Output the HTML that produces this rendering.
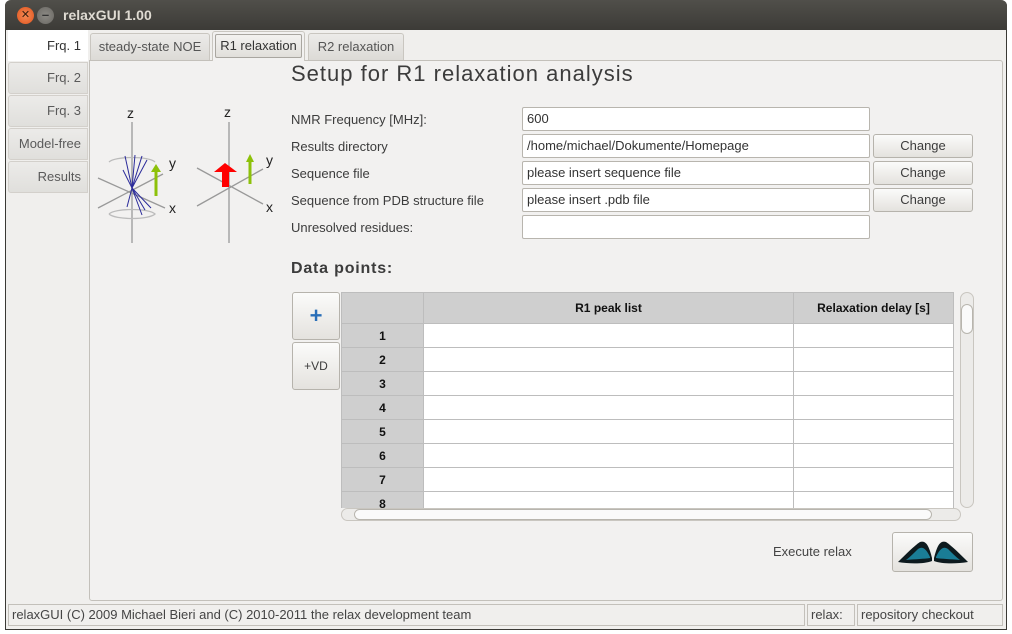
<!DOCTYPE html>
<html><head><meta charset="utf-8"><style>
*{box-sizing:border-box;margin:0;padding:0}
body{width:1012px;height:634px;background:#fff;font-family:"Liberation Sans","DejaVu Sans",sans-serif;font-size:13px;color:#3c3c3c;position:relative;overflow:hidden}
.abs{position:absolute}
#win{left:5px;top:0;width:1002px;height:630px;background:#f0efed;border:1px solid #3a3935;border-top:none;border-radius:6px 6px 0 0}
#title{left:5px;top:0;width:1002px;height:30px;background:linear-gradient(#504f4a,#3c3b37);border-radius:6px 6px 0 0;color:#dfdbd2;font-weight:bold;font-size:14px}
.ltab{left:8px;width:80px;height:32px;border:1px solid #d3d0cb;border-radius:3px 0 0 3px;background:linear-gradient(#ecebe9,#e0dfdc);text-align:right;padding-right:6px;line-height:30px;color:#5a5a5a}
.ttab{top:33px;height:27px;border:1px solid #c9c6c0;border-bottom:none;border-radius:3px 3px 0 0;background:linear-gradient(#ecebe9,#dcdad6);text-align:center;line-height:26px;color:#555}
#panel{left:89px;top:60px;width:914px;height:541px;border:1px solid #c3c0ba;border-radius:0 3px 3px 3px;background:#f2f1f0}
.lbl{left:291px;font-size:13px;color:#3c3c3c}
.inp{left:522px;width:348px;height:24px;background:#fff;border:1px solid #b8b5ae;border-radius:2px;padding-left:4px;line-height:22px;color:#333}
.btn{border:1px solid #b6b3ac;border-radius:3px;background:linear-gradient(#fbfbfa,#e4e2de);text-align:center;color:#3c3c3c}
.cbtn{left:873px;width:100px;height:24px;line-height:22px}
table{border-collapse:collapse;position:absolute;left:341px;top:292px;width:612px;table-layout:fixed}
td,th{border:1px solid #bdbdbd;height:24px;background:#fff}
th{background:#cfcfcf;height:31px;font-size:12px;color:#111}
td.rh{background:#cfcfcf;font-weight:bold;text-align:center;font-size:12px;color:#111}
.stat{top:604px;height:22px;border:1px solid #c3c0ba;line-height:20px;padding-left:3px;font-size:13px;color:#444}
</style></head><body>
<div id="win" class="abs"></div>
<div id="title" class="abs">
 <div class="abs" style="left:12px;top:7px;width:17px;height:17px;border-radius:50%;background:radial-gradient(#f58b55,#e0531d);color:#3a2010;font-size:11px;text-align:center;line-height:17px">✕</div>
 <div class="abs" style="left:32px;top:7px;width:17px;height:17px;border-radius:50%;background:radial-gradient(#8c8a85,#6a6863);color:#333;font-size:13px;text-align:center;line-height:15px">–</div>
 <div class="abs" style="left:58px;top:7px">relaxGUI 1.00</div>
</div>
<div class="abs ltab" style="top:30px;height:31px;background:#fff;border-color:#fff;color:#333;border-radius:0">Frq. 1</div>
<div class="abs ltab" style="top:62px">Frq. 2</div>
<div class="abs ltab" style="top:95px">Frq. 3</div>
<div class="abs ltab" style="top:128px">Model-free</div>
<div class="abs ltab" style="top:161px">Results</div>
<div id="panel" class="abs"></div>
<div class="abs ttab" style="left:90px;width:120px">steady-state NOE</div>
<div class="abs ttab" style="left:212px;top:31px;height:30px;width:93px;background:#f2f1f0;padding:2px"><div style="border:1px solid #a9a6a0;border-radius:2px;height:24px;line-height:22px;background:linear-gradient(#f3f2f0,#e1dfdb);color:#333">R1 relaxation</div></div>
<div class="abs ttab" style="left:308px;width:96px">R2 relaxation</div>

<svg class="abs" style="left:95px;top:100px" width="190" height="150">
 <g stroke="#999" stroke-width="1.3" fill="none">
  <line x1="37" y1="22" x2="37" y2="143"/><line x1="3" y1="108" x2="68" y2="74"/><line x1="3" y1="78" x2="70" y2="108"/>
  <line x1="134" y1="22" x2="134" y2="143"/><line x1="102" y1="106" x2="168" y2="69"/><line x1="102" y1="68" x2="168" y2="104"/>
  <path d="M14 62 C20 56 54 56 60 62" stroke="#bbb"/><path d="M14 114 C20 108 54 108 60 114 C54 120 20 120 14 114" stroke="#bbb"/>
 </g>
 <g stroke="#2a2a9a" stroke-width="1">
  <line x1="37" y1="88" x2="30" y2="56"/><line x1="37" y1="88" x2="40" y2="55"/><line x1="37" y1="88" x2="47" y2="56"/><line x1="37" y1="88" x2="52" y2="60"/><line x1="37" y1="88" x2="28" y2="70"/><line x1="37" y1="88" x2="32" y2="107"/><line x1="37" y1="88" x2="50" y2="110"/><line x1="37" y1="88" x2="47" y2="115"/><line x1="37" y1="88" x2="56" y2="108"/>
 </g>
 <line x1="61" y1="96" x2="61" y2="72" stroke="#8dc10a" stroke-width="3"/><polygon points="56,72 66,72 61,64" fill="#8dc10a"/>
 <line x1="155" y1="84" x2="155" y2="62" stroke="#8dc10a" stroke-width="3"/><polygon points="151,62 159,62 155,54" fill="#8dc10a"/>
 <polygon points="132,87 132,72 124,72 135,63 147,72 139,72 139,87" fill="#ff0000" transform="translate(-5 0)"/>
 <g font-size="14" fill="#222" font-family="Liberation Sans,sans-serif"><text x="32" y="18">z</text><text x="129" y="17">z</text><text x="74" y="68">y</text><text x="74" y="113">x</text><text x="171" y="65">y</text><text x="171" y="112">x</text></g>
</svg>

<div class="abs" style="left:291px;top:61px;font-size:22px;letter-spacing:1px;color:#3c3c3c">Setup for R1 relaxation analysis</div>
<div class="abs lbl" style="top:112px">NMR Frequency [MHz]:</div>
<div class="abs lbl" style="top:139px">Results directory</div>
<div class="abs lbl" style="top:166px">Sequence file</div>
<div class="abs lbl" style="top:193px">Sequence from PDB structure file</div>
<div class="abs lbl" style="top:220px">Unresolved residues:</div>
<div class="abs inp" style="top:107px">600</div>
<div class="abs inp" style="top:134px">/home/michael/Dokumente/Homepage</div>
<div class="abs inp" style="top:161px">please insert sequence file</div>
<div class="abs inp" style="top:188px">please insert .pdb file</div>
<div class="abs inp" style="top:215px"></div>
<div class="abs btn cbtn" style="top:134px">Change</div>
<div class="abs btn cbtn" style="top:161px">Change</div>
<div class="abs btn cbtn" style="top:188px">Change</div>
<div class="abs" style="left:291px;top:260px;font-size:16px;letter-spacing:0.8px;font-weight:bold;color:#3c3c3c">Data points:</div>
<div class="abs btn" style="left:292px;top:292px;width:48px;height:48px;line-height:46px;font-size:22px;font-weight:bold;color:#2a6fb8">+</div>
<div class="abs btn" style="left:292px;top:342px;width:48px;height:48px;line-height:46px;font-size:12px">+VD</div>
<div class="abs" style="left:341px;top:292px;width:614px;height:216px;overflow:hidden">
<table style="left:0;top:0">
<colgroup><col style="width:82px"><col style="width:370px"><col style="width:160px"></colgroup>
<tr><th></th><th>R1 peak list</th><th>Relaxation delay [s]</th></tr>
<tr><td class="rh">1</td><td></td><td></td></tr>
<tr><td class="rh">2</td><td></td><td></td></tr>
<tr><td class="rh">3</td><td></td><td></td></tr>
<tr><td class="rh">4</td><td></td><td></td></tr>
<tr><td class="rh">5</td><td></td><td></td></tr>
<tr><td class="rh">6</td><td></td><td></td></tr>
<tr><td class="rh">7</td><td></td><td></td></tr>
<tr><td class="rh">8</td><td></td><td></td></tr>
</table></div>
<div class="abs" style="left:960px;top:292px;width:14px;height:216px;border:1px solid #c9c6c0;border-radius:7px;background:#ecebe9"></div>
<div class="abs" style="left:961px;top:304px;width:12px;height:30px;border:1px solid #b8b5ae;border-radius:6px;background:#fafafa"></div>
<div class="abs" style="left:341px;top:508px;width:620px;height:13px;border:1px solid #c9c6c0;border-radius:7px;background:#ecebe9"></div>
<div class="abs" style="left:354px;top:509px;width:578px;height:11px;border:1px solid #b8b5ae;border-radius:6px;background:#fafafa"></div>
<div class="abs" style="left:773px;top:544px;color:#444">Execute relax</div>
<div class="abs btn" style="left:892px;top:532px;width:81px;height:40px"></div>
<svg class="abs" style="left:896px;top:536px" width="74" height="32">
 <path d="M36 22 C33 10 30 4 24 6 C18 10 10 18 2 26 C14 28 28 28 36 25Z" fill="#0d1a1e"/>
 <path d="M38 22 C41 10 44 4 50 6 C56 10 64 18 72 26 C60 28 46 28 38 25Z" fill="#0d1a1e"/>
 <path d="M34 21 C30 12 26 10 22 13 C18 17 14 21 10 24 C20 23 28 23 34 22Z" fill="#1a7d96"/>
 <path d="M40 21 C44 12 48 10 52 13 C56 17 60 21 64 24 C54 23 46 23 40 22Z" fill="#1a7d96"/>
</svg>
<div class="abs stat" style="left:8px;width:797px">relaxGUI (C) 2009 Michael Bieri and (C) 2010-2011 the relax development team</div>
<div class="abs stat" style="left:807px;width:48px">relax:</div>
<div class="abs stat" style="left:857px;width:146px">repository checkout</div>
</body></html>
